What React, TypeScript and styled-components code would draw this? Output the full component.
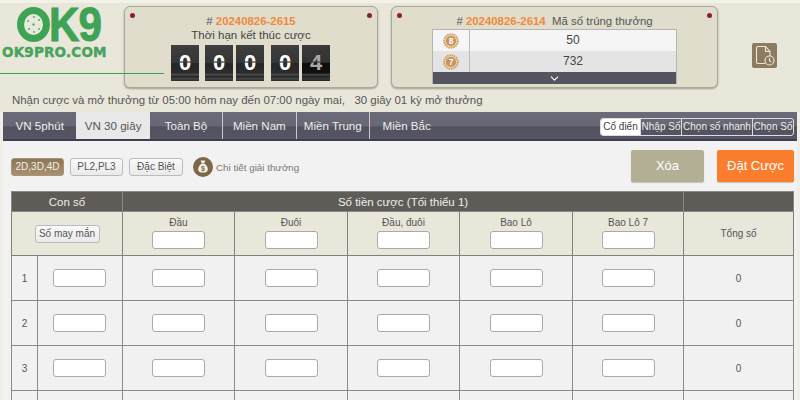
import React from 'react';
import styled, { createGlobalStyle } from 'styled-components';
import { ChevronDown } from 'lucide-react';

const GlobalStyle = createGlobalStyle`
  html, body {
    margin: 0;
    padding: 0;
    background: #f0eee6;
  }
  * {
    box-sizing: border-box;
  }
`;

const Page = styled.div`
  width: 800px;
  height: 400px;
  overflow: hidden;
  font-family: 'Liberation Sans', Arial, sans-serif;
  color: #555;
  background: #f0eee6;
`;

const TopBar = styled.div`
  height: 112px;
  padding-top: 3px;
  background: #e9e6da;
  border-top: 3px solid #f2f1ea;
`;

const TopRow = styled.div`
  display: flex;
  height: 82px;
`;

const Logo = styled.div`
  position: relative;
  width: 124px;
  flex: none;
`;

const LogoMark = styled.div`
  display: flex;
  align-items: center;
  height: 36px;
  padding-left: 17px;
`;

const LogoLetters = styled.span`
  display: inline-block;
  margin-left: -1px;
  font-size: 49px;
  font-weight: 700;
  line-height: 36px;
  letter-spacing: -1px;
  color: #3fa356;
  -webkit-text-stroke: 1px #3fa356;
  transform: scaleX(0.86);
  transform-origin: left center;
`;

const LogoSite = styled.div`
  margin: 3px 0 0 2px;
  font-family: 'DejaVu Sans', sans-serif;
  font-size: 13.5px;
  font-weight: 700;
  line-height: 14px;
  letter-spacing: 0.2px;
  color: #46a45c;
  -webkit-text-stroke: 0.4px #46a45c;
  white-space: nowrap;
`;

const LogoRule = styled.div`
  position: absolute;
  z-index: 2;
  left: 0;
  top: 67px;
  width: 164px;
  height: 1px;
  background: #3f9f55;
`;

const Panel = styled.div<{ $width: number }>`
  position: relative;
  width: ${(p) => p.$width}px;
  flex: none;
  height: 82px;
  margin-right: 13px;
  border: 1px solid #aaa897;
  border-radius: 6px;
  background: #e0ddcd;
  box-shadow: 0 1px 2px rgba(70, 70, 60, 0.45);
`;

const Rivet = styled.i<{ $right?: boolean }>`
  position: absolute;
  top: 6px;
  ${(p) => (p.$right ? 'right: 5px;' : 'left: 5px;')}
  width: 5px;
  height: 5px;
  border-radius: 50%;
  background: #8c1f36;
`;

const DrawTitle = styled.div`
  padding-top: 7px;
  text-align: center;
  font-size: 11.4px;
  line-height: 14px;
  color: #555;
`;

const DrawNumber = styled.b`
  color: #f08a3c;
`;

const DrawCaption = styled.div`
  text-align: center;
  font-size: 11.5px;
  line-height: 14px;
  color: #444;
`;

const Countdown = styled.div`
  display: flex;
  margin: 3px 0 0 46px;
`;

const FlipDigit = styled.div<{ $gap: number; $fading?: boolean }>`
  position: relative;
  width: 28px;
  height: 36px;
  margin-right: ${(p) => p.$gap}px;
  background: ${(p) =>
    p.$fading
      ? 'linear-gradient(180deg, #3a3a3a 0%, #333 44%, #0d0d0d 50%, #111 78%, #444 82%, #222 88%, #3a3a3a 94%, #222 100%)'
      : 'linear-gradient(180deg, #3e3e3e 0%, #363636 44%, #262626 52%, #2c2c2c 78%, #4c4c4c 82%, #262626 88%, #454545 94%, #2a2a2a 100%)'};
  color: ${(p) => (p.$fading ? '#a8a8a8' : '#fff')};
  font-size: 22px;
  font-weight: 700;
  line-height: 35px;
  text-align: center;
  &::after {
    content: '';
    position: absolute;
    left: 0;
    right: 0;
    top: 16px;
    height: 2px;
    background: rgba(60, 60, 60, 0.6);
  }
`;

const ResultTable = styled.div`
  width: 245px;
  margin: 1px auto 0;
  border: 1px solid #b5b5b5;
  border-bottom: 0;
`;

const ResultRow = styled.div<{ $shade: string }>`
  display: flex;
  height: 21px;
  background: ${(p) => p.$shade};
`;

const ResultPrize = styled.div`
  display: flex;
  align-items: center;
  justify-content: center;
  width: 37px;
  border-right: 1px solid #bbb;
`;

const ResultValue = styled.div`
  flex: 1;
  font-size: 12px;
  line-height: 21px;
  text-align: center;
  color: #444;
`;

const ResultMore = styled.div`
  display: flex;
  align-items: center;
  justify-content: center;
  height: 12px;
  background: #55555f;
  color: #fff;
`;

const HistoryButton = styled.div`
  display: flex;
  align-items: center;
  justify-content: center;
  width: 25px;
  height: 25px;
  margin: 37px 0 0 21px;
  border-radius: 2px;
  background: #8b7b60;
`;

const InfoLine = styled.div`
  margin-top: 5px;
  padding-left: 12px;
  font-size: 11.45px;
  line-height: 14px;
  color: #555;
  white-space: pre;
`;

const TabBar = styled.div`
  display: flex;
  align-items: flex-start;
  height: 29px;
  margin: 0 3px;
  border-bottom: 2px solid #3f3f50;
  background: linear-gradient(180deg, #6a6a78 0%, #676775 50%, #52525f 56%, #555563 100%);
`;

const Tab = styled.div<{ $active?: boolean; $divider?: boolean }>`
  width: 73.4px;
  height: 27px;
  font-size: 11.6px;
  line-height: 27px;
  text-align: center;
  color: ${(p) => (p.$active ? '#555' : '#eee')};
  background: ${(p) => (p.$active ? '#e8e8e8' : 'transparent')};
  border-right: ${(p) => (p.$divider ? '1px solid #c9c9d0' : '0')};
`;

const Modes = styled.div`
  display: flex;
  height: 18px;
  margin: 6px 3px 0 auto;
  border: 1px solid #ddd;
  border-radius: 3px;
  overflow: hidden;
`;

const Mode = styled.div<{ $active?: boolean; $width: number }>`
  width: ${(p) => p.$width}px;
  font-size: 10px;
  line-height: 16px;
  text-align: center;
  white-space: nowrap;
  color: ${(p) => (p.$active ? '#444' : '#eee')};
  background: ${(p) => (p.$active ? '#fff' : 'transparent')};
  & + & {
    border-left: 1px solid #ddd;
  }
`;

const Content = styled.div`
  margin: 0 3px;
  padding: 0 3px 0 8px;
  background: #f2f2f2;
`;

const Toolbar = styled.div`
  display: flex;
  align-items: flex-start;
  height: 50px;
  padding-top: 9px;
`;

const Kinds = styled.div`
  display: flex;
  align-items: center;
  gap: 6px;
  height: 20px;
  margin-top: 7px;
`;

const Kind = styled.div<{ $active?: boolean; $width: number }>`
  width: ${(p) => p.$width}px;
  height: 18px;
  border: 1px solid ${(p) => (p.$active ? '#a89478' : '#bbb')};
  border-radius: 3px;
  font-size: 10px;
  line-height: 16px;
  text-align: center;
  color: ${(p) => (p.$active ? '#f4efe6' : '#555')};
  background: ${(p) => (p.$active ? 'linear-gradient(180deg, #8d7557, #a89070)' : 'linear-gradient(180deg, #fafafa, #e9e9e9)')};
`;

const PrizeLink = styled.div`
  display: flex;
  align-items: center;
  gap: 3px;
  margin-left: 4px;
  font-size: 9.8px;
  color: #777;
`;

const ActionButton = styled.div<{ $color: string; $width: number; $gapLeft: string }>`
  width: ${(p) => p.$width}px;
  height: 32px;
  margin-left: ${(p) => p.$gapLeft};
  border-radius: 2px;
  background: ${(p) => p.$color};
  box-shadow: 0 1px 1px rgba(0, 0, 0, 0.2);
  color: #fff;
  font-size: 13px;
  line-height: 32px;
  text-align: center;
`;

const BetTable = styled.table`
  width: 782px;
  table-layout: fixed;
  border-collapse: collapse;
  color: #555;
`;

const Head = styled.th`
  height: 20px;
  padding: 0;
  border: 1px solid #888;
  background: #5f5c58;
  color: #eee;
  font-size: 11.5px;
  font-weight: 400;
`;

const SubHead = styled.td`
  height: 44px;
  padding: 0;
  border: 1px solid #808080;
  background: #e9e6da;
  font-size: 10px;
  text-align: center;
`;

const BetTypeHead = styled(SubHead)`
  padding-bottom: 2px;
`;

const SubLabel = styled.div`
  line-height: 12px;
  margin-bottom: 2px;
`;

const Cell = styled.td`
  height: 45px;
  padding: 0;
  border: 1px solid #8a8a8a;
  background: #f1f1f1;
  font-size: 10px;
  text-align: center;
`;

const NumberCell = styled(Cell)`
  padding-right: 2px;
`;

const LuckyButton = styled.div`
  display: inline-block;
  width: 65px;
  height: 18px;
  border: 1px solid #bbb;
  border-radius: 3px;
  background: linear-gradient(180deg, #fafafa, #e9e9e9);
  font-size: 10px;
  line-height: 16px;
`;

const Amount = styled.input`
  display: block;
  width: 53px;
  height: 18px;
  margin: 0 auto;
  padding: 0;
  border: 1px solid #aaa;
  border-radius: 3px;
  background: #fff;
`;

const Medal: React.FC<{ n: number }> = ({ n }) => (
  <svg width="16" height="16" viewBox="0 0 16 16">
    <circle cx="8" cy="8" r="7" fill="#e8c9a0" stroke="#c99a62" strokeWidth="1.6" strokeDasharray="1.4 1" />
    <circle cx="8" cy="8" r="5" fill="#c8935c" />
    <text x="8" y="11" fontSize="8.5" fontWeight="700" textAnchor="middle" fill="#fff" fontFamily="Liberation Sans">
      {n}
    </text>
  </svg>
);

const MoneyBag = () => (
  <svg width="20" height="20" viewBox="0 0 20 20">
    <circle cx="10" cy="10" r="10" fill="#7d6748" />
    <path d="M7.6 3.6h4.8l-1.2 2.6h-2.4zM8.4 6.8h3.2c2 1.5 3.2 3.6 3.2 5.6 0 2-1.4 3.2-4.8 3.2s-4.8-1.2-4.8-3.2c0-2 1.2-4.1 3.2-5.6z" fill="#f5f1e8" />
    <text x="10" y="14" fontSize="7" fontWeight="700" textAnchor="middle" fill="#7d6748" fontFamily="Liberation Sans">
      $
    </text>
  </svg>
);

const WheelO = () => (
  <svg width="33" height="35" viewBox="0 0 33 35">
    <ellipse cx="16.5" cy="17.5" rx="13" ry="14" fill="#e8eadb" stroke="#3fa356" strokeWidth="7" />
    <g fill="#5faf72">
      <circle cx="17" cy="10" r="1.1" />
      <circle cx="11" cy="14" r="1" />
      <circle cx="22" cy="13" r="1.1" />
      <circle cx="12" cy="22" r="1.1" />
      <circle cx="22" cy="22" r="1" />
      <circle cx="16.5" cy="17.5" r="1.2" />
      <circle cx="17" cy="25" r="1" />
    </g>
  </svg>
);

const HistoryIcon = () => (
  <svg width="20" height="21" viewBox="0 0 20 21" fill="none" stroke="#efe9dc" strokeWidth="1.1">
    <path d="M3 1.5h7.5l4.5 5v4.5M10.5 1.5v5h4.5M3 1.5c-1 0-1.5.6-1.5 1.5v14c0 .9.5 1.5 1.5 1.5h7" />
    <circle cx="14.5" cy="15.5" r="4.5" />
    <path d="M14.5 13v2.7l1.8 1" />
  </svg>
);

const columns = [26, 85, 112, 113, 112, 113, 111, 110];
const betTypes = ['Đầu', 'Đuôi', 'Đầu, đuôi', 'Bao Lô', 'Bao Lô 7'];
const tabs = ['VN 5phút', 'VN 30 giây', 'Toàn Bộ', 'Miền Nam', 'Miền Trung', 'Miền Bắc'];
const modes = [
  { label: 'Cổ điển', width: 39 },
  { label: 'Nhập Số', width: 41 },
  { label: 'Chọn số nhanh', width: 71 },
  { label: 'Chọn Số', width: 41 },
];

export default function App() {
  return (
    <Page>
      <GlobalStyle />
      <TopBar>
        <TopRow>
          <Logo>
            <LogoMark>
              <WheelO />
              <LogoLetters>K9</LogoLetters>
            </LogoMark>
            <LogoSite>OK9PRO.COM</LogoSite>
            <LogoRule />
          </Logo>
          <Panel $width={254}>
            <Rivet />
            <Rivet $right />
            <DrawTitle>
              # <DrawNumber>20240826-2615</DrawNumber>
            </DrawTitle>
            <DrawCaption>Thời hạn kết thúc cược</DrawCaption>
            <Countdown>
              <FlipDigit $gap={6}>0</FlipDigit>
              <FlipDigit $gap={3}>0</FlipDigit>
              <FlipDigit $gap={7}>0</FlipDigit>
              <FlipDigit $gap={3}>0</FlipDigit>
              <FlipDigit $gap={0} $fading>
                4
              </FlipDigit>
            </Countdown>
          </Panel>
          <Panel $width={327}>
            <Rivet />
            <Rivet $right />
            <DrawTitle>
              # <DrawNumber>20240826-2614</DrawNumber>&nbsp; Mã số trúng thưởng
            </DrawTitle>
            <ResultTable>
              <ResultRow $shade="#f5f5f5">
                <ResultPrize>
                  <Medal n={8} />
                </ResultPrize>
                <ResultValue>50</ResultValue>
              </ResultRow>
              <ResultRow $shade="#e4e4e4">
                <ResultPrize>
                  <Medal n={7} />
                </ResultPrize>
                <ResultValue>732</ResultValue>
              </ResultRow>
              <ResultMore>
                <ChevronDown size={13} strokeWidth={2} />
              </ResultMore>
            </ResultTable>
          </Panel>
          <HistoryButton>
            <HistoryIcon />
          </HistoryButton>
        </TopRow>
        <InfoLine>Nhận cược và mở thưởng từ 05:00 hôm nay đến 07:00 ngày mai,   30 giây 01 kỳ mở thưởng</InfoLine>
      </TopBar>
      <TabBar>
        {tabs.map((tab, i) => (
          <Tab key={tab} $active={i === 1} $divider={i >= 2 && i < 5}>
            {tab}
          </Tab>
        ))}
        <Modes>
          {modes.map((mode, i) => (
            <Mode key={mode.label} $active={i === 0} $width={mode.width}>
              {mode.label}
            </Mode>
          ))}
        </Modes>
      </TabBar>
      <Content>
        <Toolbar>
          <Kinds>
            <Kind $active $width={53}>
              2D,3D,4D
            </Kind>
            <Kind $width={53}>PL2,PL3</Kind>
            <Kind $width={54}>Đặc Biệt</Kind>
            <PrizeLink>
              <MoneyBag />
              Chi tiết giải thưởng
            </PrizeLink>
          </Kinds>
          <ActionButton $color="#b3b096" $width={73} $gapLeft="auto">
            Xóa
          </ActionButton>
          <ActionButton $color="#f97d2d" $width={77} $gapLeft="13px">
            Đặt Cược
          </ActionButton>
        </Toolbar>
        <BetTable>
          <colgroup>
            {columns.map((width, i) => (
              <col key={i} width={width} />
            ))}
          </colgroup>
          <thead>
            <tr>
              <Head colSpan={2}>Con số</Head>
              <Head colSpan={5}>Số tiền cược (Tối thiểu 1)</Head>
              <Head />
            </tr>
          </thead>
          <tbody>
            <tr>
              <SubHead colSpan={2}>
                <LuckyButton>Số may mắn</LuckyButton>
              </SubHead>
              {betTypes.map((type) => (
                <BetTypeHead key={type}>
                  <SubLabel>{type}</SubLabel>
                  <Amount />
                </BetTypeHead>
              ))}
              <SubHead>Tổng số</SubHead>
            </tr>
            {[1, 2, 3].map((row) => (
              <tr key={row}>
                <Cell>{row}</Cell>
                <NumberCell>
                  <Amount />
                </NumberCell>
                {betTypes.map((type) => (
                  <Cell key={type}>
                    <Amount />
                  </Cell>
                ))}
                <Cell>0</Cell>
              </tr>
            ))}
            <tr>
              {columns.map((_, i) => (
                <Cell key={i} />
              ))}
            </tr>
          </tbody>
        </BetTable>
      </Content>
    </Page>
  );
}
